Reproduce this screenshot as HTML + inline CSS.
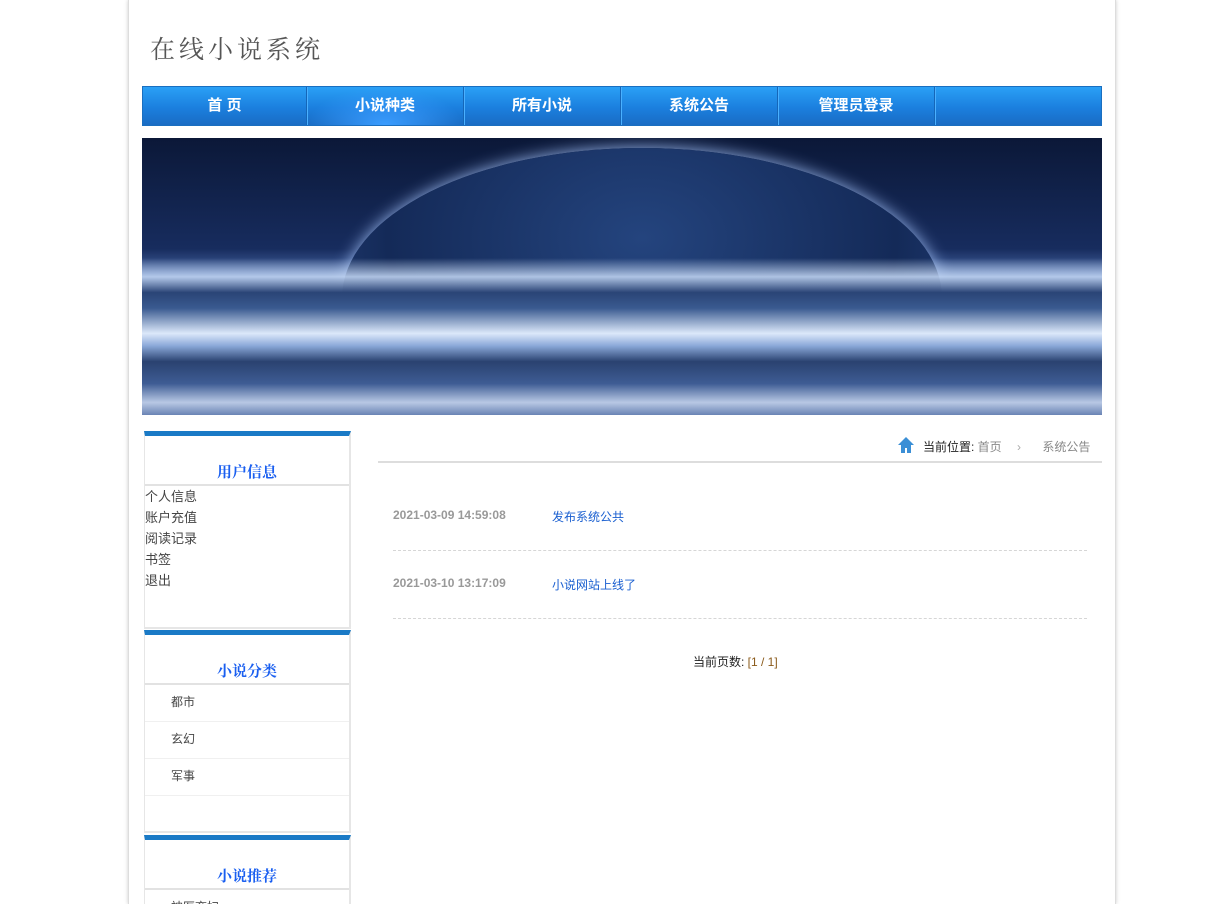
<!DOCTYPE html>
<html><head><meta charset="utf-8"><style>
*{margin:0;padding:0;box-sizing:border-box}
html,body{width:1213px;height:904px;overflow:hidden}
body{background:#fff;font-family:"Liberation Sans","Noto Sans CJK SC",sans-serif;font-size:12px;color:#333;position:relative}
.wrap{position:absolute;left:128px;top:0;width:988px;height:904px;border-left:1px solid #ddd;border-right:1px solid #ddd;box-shadow:0 0 4px #ccc}
.abs{position:absolute}
.logo{left:150px;top:30px;font-family:"Noto Serif CJK SC",serif;font-size:25px;color:#555;letter-spacing:4px}
.nav{left:142px;top:86px;width:960px;height:40px;border:1px solid #1a6fc0;background:linear-gradient(#2aa0f6,#1b7fde 55%,#1a6cc4);display:flex}
.nav div{width:157px;border-right:1px solid #1566b8;box-shadow:1px 0 0 #4ab0ff;color:#fff;font-weight:bold;font-size:15px;text-align:center;line-height:38px;font-family:"Liberation Sans","Noto Sans CJK SC",sans-serif}
.nav div:first-child{width:164px}
.nav div.on{background:radial-gradient(ellipse at 50% 100%,#3a9cff,transparent 70%)}
.banner{left:142px;top:138px;width:960px;height:277px;overflow:hidden;background:linear-gradient(#0b1838 0%,#172c5e 40%,#4a6aa8 50%,#a8c0e8 55%)}
.planet{left:200px;top:10px;width:600px;height:300px;border-radius:50%;background:radial-gradient(ellipse at 50% 30%,#24447e,#142a58 60%,#2a4a88);box-shadow:0 0 16px #9ab8ee}
.box{position:absolute;left:144px;width:207px;border-top:5px solid #1a7ac6;border-left:1px solid #e6e6e6;border-right:2px solid #e6e6e6;border-bottom:2px solid #e6e6e6;overflow:hidden}
.box h3{color:#1a5ff0;font-size:15px;text-align:center;font-family:"Liberation Serif","Noto Serif CJK SC",serif;border-bottom:2px solid #e2e2e2;padding-top:25px;height:50px;line-height:24px}
.box p{font-size:13px;line-height:21px;color:#444}
.box .r{height:37px;line-height:34px;padding-left:26px;border-bottom:1px solid #f0f0f0;font-size:12px;color:#444}
.dash{left:393px;width:694px;border-top:1px dashed #d6d6d6}
.dt{left:393px;color:#999;font-weight:bold;font-size:12px}
.lk{left:552px;color:#1a5fd0;font-size:12px}
</style></head><body>
<div class="wrap"></div>
<div class="abs logo">在线小说系统</div>
<div class="abs nav"><div>首 页</div><div class="on">小说种类</div><div>所有小说</div><div>系统公告</div><div>管理员登录</div><div style="flex:1;border:none;box-shadow:none"></div></div>
<div class="abs banner"><div class="abs planet"></div>
<div class="abs" style="left:0;top:120px;width:960px;height:157px;background:linear-gradient(rgba(160,185,225,0) 0%,rgba(190,210,240,.9) 12%,#2a4476 22%,#3a5a90 32%,#dce8fa 48%,#8aa8d8 56%,#2a4270 66%,#3e5c94 80%,#b8c8e4 92%,#6a84b4 100%)"></div></div>
<div class="box" style="top:431px;height:198px"><h3>用户信息</h3><p>个人信息<br>账户充值<br>阅读记录<br>书签<br>退出</p></div>
<div class="box" style="top:630px;height:203px"><h3>小说分类</h3><div class="r">都市</div><div class="r">玄幻</div><div class="r">军事</div></div>
<div class="box" style="top:835px;height:80px"><h3>小说推荐</h3><div class="r">神医弃妇</div></div>
<svg class="abs" style="left:897px;top:436px" width="18" height="18" viewBox="0 0 18 18"><path d="M9 1L1 9h3v8h4v-5h2v5h4V9h3z" fill="#3b8fd6"/></svg>
<div class="abs" style="left:923px;top:438px;font-size:12px;color:#222">当前位置: <span style="color:#888">首页</span> <span style="color:#aaa;margin:0 12px">›</span> <span style="color:#888;margin-left:6px">系统公告</span></div>
<div class="abs" style="left:378px;top:461px;width:724px;border-top:2px solid #ddd"></div>
<div class="abs dt" style="top:508px">2021-03-09 14:59:08</div><div class="abs lk" style="top:508px">发布系统公共</div>
<div class="abs dash" style="top:550px"></div>
<div class="abs dt" style="top:576px">2021-03-10 13:17:09</div><div class="abs lk" style="top:576px">小说网站上线了</div>
<div class="abs dash" style="top:618px"></div>
<div class="abs" style="left:693px;top:653px;font-size:12px;color:#222">当前页数: <span style="color:#8a5a1a">[1 / 1]</span></div>
</body></html>
